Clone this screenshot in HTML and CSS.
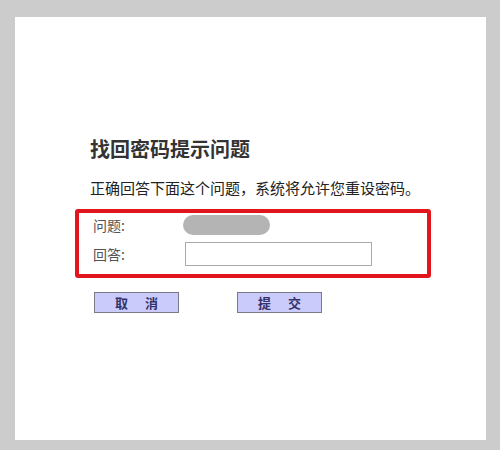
FILE: index.html
```html
<!DOCTYPE html>
<html lang="zh-CN">
<head>
<meta charset="utf-8">
<title>找回密码提示问题</title>
<link rel="stylesheet" href="styles.css">
</head>
<body>
<div class="panel">
  <h1 class="title">找回密码提示问题</h1>
  <p class="desc">正确回答下面这个问题，系统将允许您重设密码。</p>
  <div class="qa-box">
    <div class="row row-q">
      <span class="label">问题:</span>
      <span class="masked"></span>
    </div>
    <div class="row row-a">
      <span class="label">回答:</span>
      <input class="answer" type="text">
    </div>
  </div>
  <div class="actions">
    <button class="btn" type="button"><span>取</span><span>消</span></button>
    <button class="btn" type="button"><span>提</span><span>交</span></button>
  </div>
</div>
</body>
</html>
```

FILE: styles.css
```css
html, body {
  margin: 0;
  padding: 0;
}
body {
  background: #cccccc;
  font-family: "Noto Sans CJK SC", "Liberation Sans", sans-serif;
  padding: 17px 14px 10px 15px;
}
.panel {
  background: #ffffff;
  height: 423px;
  box-sizing: border-box;
  padding: 120px 0 0 76px;
}
.title {
  margin: 0;
  font-size: 20px;
  line-height: 24px;
  font-weight: bold;
  color: #333333;
  margin-left: -1px;
}
.desc {
  margin: 16px 0 0 -1px;
  font-size: 15px;
  line-height: 21px;
  color: #222222;
}
.qa-box {
  margin: 11px 0 0 -16px;
  width: 356px;
  box-sizing: border-box;
  border: 4px solid #e2151d;
  border-radius: 3px;
  padding: 2px 0 8px 14px;
  display: flex;
  flex-direction: column;
  gap: 7px;
}
.row {
  display: flex;
  align-items: center;
}
.label {
  width: 90px;
  font-size: 14px;
  color: #555555;
  line-height: 20px;
}
.masked {
  width: 87px;
  height: 20px;
  border-radius: 10px;
  background: #b4b4b4;
}
.answer {
  margin: 0 0 0 2px;
  width: 187px;
  height: 24px;
  box-sizing: border-box;
  border: 1px solid #aaaaaa;
  padding: 0;
  background: #fff;
}
.actions {
  margin: 14px 0 0 3px;
  display: flex;
  gap: 58px;
}
.btn {
  width: 85px;
  height: 21px;
  box-sizing: border-box;
  margin: 0;
  padding: 0;
  border: 1px solid #7a7a8a;
  background: #cbcbfb;
  display: flex;
  justify-content: center;
  align-items: center;
  gap: 17px;
  font-family: "Noto Sans CJK SC", sans-serif;
  font-size: 13px;
  font-weight: bold;
  color: #33336a;
  line-height: 1;
}
```
